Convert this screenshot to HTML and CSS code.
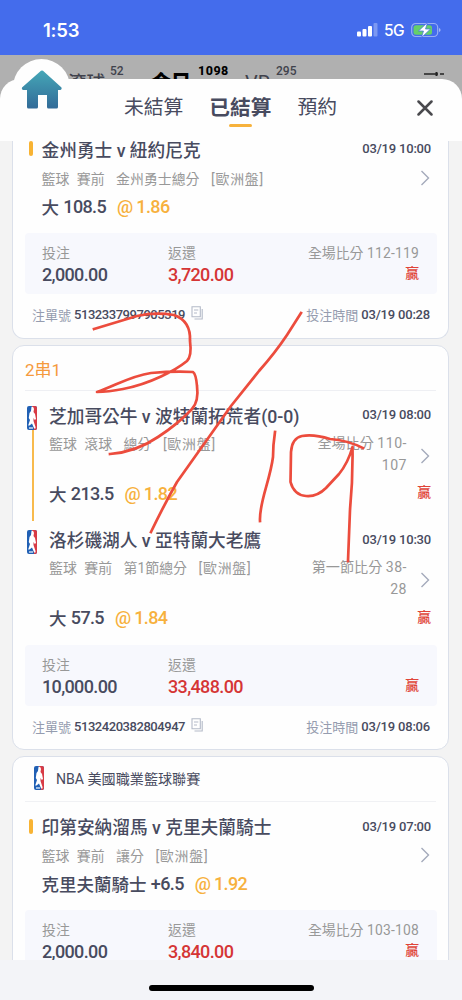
FILE: index.html
```
<!DOCTYPE html>
<html lang="zh-Hant">
<head>
<meta charset="utf-8">
<meta name="viewport" content="width=device-width">
<title>已結算</title>
<link rel="stylesheet" href="styles.css">
</head>
<body>
<svg class="defs" width="0" height="0">
  <defs>
    <symbol id="nba" viewBox="0 0 10 24">
      <rect width="10" height="24" rx="2" fill="#2160b4"/>
      <path d="M5 0h3a2 2 0 0 1 2 2v20a2 2 0 0 1-2 2H7z" fill="#d83b45"/>
      <path d="M4.500.8Q6.500 0 7 3L6.500 6 8 8l1 5-1.200 1L6.500 12v3l2 6v1.500H7.200L5 17.500l-2.500 2H1.200L3 14 1.800 12l.7-5L4 5z" fill="#fff"/>
      <path d="M2 22h4" stroke="#d5e4f7" stroke-width="1.400"/>
    </symbol>
    <symbol id="chev" viewBox="0 0 10 16"><path d="M1.500 1 8.500 8l-7 7" fill="none" stroke="#a4aabb" stroke-width="1.400"/></symbol>
    <symbol id="copy" viewBox="0 0 12 14"><path d="M1 .8h8.300v10H1zM3 4h4.300M3 7h3M11.200 3v10H3.500" fill="none" stroke="#b4bac8" stroke-width="1.100"/></symbol>
  </defs>
</svg>
<div class="screen">
  <header class="status">
    <span class="clock">1:53</span>
    <svg class="signal" width="21" height="14" viewBox="0 0 21 14"><g fill="#fff"><rect y="8.500" width="4" height="5" rx="1"/><rect x="5.500" y="6" width="4" height="7.500" rx="1"/><rect x="11" y="3" width="4" height="10.500" rx="1"/><rect x="16.500" width="4" height="13.500" rx="1" opacity=".3"/></g></svg>
    <span class="net">5G</span>
    <svg class="battery" width="30" height="16" viewBox="0 0 30 16"><rect x=".7" y="1.500" width="26" height="13" rx="4" fill="none" stroke="#fff" stroke-opacity=".45" stroke-width="1.200"/><rect x="2.500" y="3.300" width="18.500" height="9.400" rx="2.500" fill="#65cf69"/><path d="M28 6v4q1.600-.5 1.600-2T28 6z" fill="#fff" opacity=".5"/><path d="M16.500.5 7.500 9h5L10.500 15.500l9-8.500h-5z" fill="#fff" stroke="#446cec" stroke-width=".7"/></svg>
  </header>
  <nav class="sports">
    <span class="sport s-volley">滾球</span><sup class="c-volley">52</sup>
    <span class="sport s-today">今日</span><sup class="c-today">1098</sup>
    <span class="sport s-vr">VR</span><sup class="c-vr">295</sup>
    <svg class="filter" width="20" height="6" viewBox="0 0 20 6"><path d="M0 3h14M16 3h4" stroke="#222" stroke-width="1.700"/><path d="M12.500 1v4" stroke="#222" stroke-width="2"/></svg>
  </nav>
  <section class="sheet">
    <div class="tabs">
      <span class="tab">未結算</span>
      <span class="tab on">已結算</span>
      <span class="tab">預約</span>
      <svg class="close" width="16" height="16" viewBox="0 0 16 16"><path d="m1.500 1.500 13 13m0-13-13 13" stroke="#4a4a4e" stroke-width="2.500" stroke-linecap="round"/></svg>
    </div>
    <main class="list">
      <article class="card first">
        <div class="title"><i class="bar"></i><b>金州勇士 v 紐約尼克</b><time>03/19 10:00</time></div>
        <div class="meta"><span>籃球</span><span>賽前</span><span class="wide">金州勇士總分</span><span class="wide market">[歐洲盤]</span><svg class="chev"><use href="#chev"/></svg></div>
        <div class="pick">大 <span class="n">108.5</span><em>@ 1.86</em></div>
        <div class="box">
          <div><label>投注</label><strong>2,000.00</strong></div>
          <div><label>返還</label><strong class="red">3,720.00</strong></div>
          <div class="res"><label>全場比分 <span class="sc">112-119</span></label><span class="win">贏</span></div>
        </div>
        <div class="foot"><span>注單號</span><b class="id">5132337997905319</b><svg class="copy"><use href="#copy"/></svg><span class="at">投注時間</span><time>03/19 00:28</time></div>
      </article>

      <article class="card second">
        <div class="combo">2串1</div>
        <div class="leg joined">
          <div class="rail"><svg class="nba"><use href="#nba"/></svg></div>
          <div class="body">
            <div class="title"><b>芝加哥公牛 v 波特蘭拓荒者(0-0)</b><time>03/19 08:00</time></div>
            <div class="info">
              <div class="meta"><span>籃球</span><span>滾球</span><span class="wide">總分</span><span class="wide market">[歐洲盤]</span></div>
              <div class="legscore">全場比分 <span class="sc">110-<br>107</span></div>
              <svg class="chev"><use href="#chev"/></svg>
            </div>
            <div class="pick">大 <span class="n">213.5</span><em>@ 1.82</em><span class="win">贏</span></div>
          </div>
        </div>
        <div class="leg">
          <div class="rail"><svg class="nba"><use href="#nba"/></svg></div>
          <div class="body">
            <div class="title"><b>洛杉磯湖人 v 亞特蘭大老鷹</b><time>03/19 10:30</time></div>
            <div class="info">
              <div class="meta"><span>籃球</span><span>賽前</span><span class="wide">第1節總分</span><span class="wide market">[歐洲盤]</span></div>
              <div class="legscore">第一節比分 <span class="sc">38-<br>28</span></div>
              <svg class="chev"><use href="#chev"/></svg>
            </div>
            <div class="pick">大 <span class="n">57.5</span><em>@ 1.84</em><span class="win">贏</span></div>
          </div>
        </div>
        <div class="box">
          <div><label>投注</label><strong>10,000.00</strong></div>
          <div><label>返還</label><strong class="red">33,488.00</strong></div>
          <div class="res"><label>&nbsp;</label><span class="win">贏</span></div>
        </div>
        <div class="foot"><span>注單號</span><b class="id">5132420382804947</b><svg class="copy"><use href="#copy"/></svg><span class="at">投注時間</span><time>03/19 08:06</time></div>
      </article>

      <article class="card third">
        <div class="league"><svg class="nba"><use href="#nba"/></svg><span>NBA 美國職業籃球聯賽</span></div>
        <div class="title"><i class="bar"></i><b>印第安納溜馬 v 克里夫蘭騎士</b><time>03/19 07:00</time></div>
        <div class="meta"><span>籃球</span><span>賽前</span><span class="wide">讓分</span><span class="wide market">[歐洲盤]</span><svg class="chev"><use href="#chev"/></svg></div>
        <div class="pick">克里夫蘭騎士 <span class="n">+6.5</span><em>@ 1.92</em></div>
        <div class="box">
          <div><label>投注</label><strong>2,000.00</strong></div>
          <div><label>返還</label><strong class="red">3,840.00</strong></div>
          <div class="res"><label>全場比分 <span class="sc">103-108</span></label><span class="win">贏</span></div>
        </div>
      </article>
    </main>
  </section>
  <footer class="homebar"><i></i></footer>

  <div class="home"><svg width="42" height="40" viewBox="0 0 42 40"><defs><linearGradient id="hg" x2="0" y2="1"><stop stop-color="#45a7b7"/><stop offset="1" stop-color="#326b98"/></linearGradient></defs><path d="M20 .8q1-.8 2 0L40.500 17.500q.8 1.700-1 2.500H37v17q0 1.500-1.500 1.500H27.500q-1.500 0-1.500-1.500V25H17v12q0 1.500-1.500 1.500H7.500Q6 38.500 6 37V20H2q-1.800-.8-1-2.500z" fill="url(#hg)"/></svg></div>
  <svg class="ink" width="462" height="1000" viewBox="0 0 462 1000">
    <g fill="none" stroke="#ec4c3d" stroke-width="2.700" stroke-linecap="square" stroke-linejoin="round">
      <path d="M94 329 L137 316 Q155 312 174 315 Q191 321 190 341 Q192 356 187 361 C176 370 150 384 123 389 Q108 392 97 392 C115 386 130 376 151 373 Q174 371 193 372 Q196 374 197 386 Q199 401 192 409 Q178 424 158 437 Q136 452 110 454"/>
      <path d="M301 313 L287 335 Q275 353 259 371 L231 406 L199 451 L177 482 Q164 505 151 532"/>
      <path d="M275 432 Q273 445 273 457 C270 481 259 502 260 521"/>
      <path d="M363 448 Q347 440 330 439 Q314 434 302 436 Q292 438 291 452 L290.500 482 Q294 495 306 496 Q317 497 326 488 L339 474 Q348 463 352.500 447 Q353 479 350 510 L348 561"/>
    </g>
  </svg>
</div>
</body>
</html>
```
FILE: styles.css
```
* { box-sizing: border-box; }
body { margin: 0; font-family: Roboto, "Noto Sans CJK TC", sans-serif; color: #484b5f; }
.defs { display: block; }
.screen { position: relative; width: 462px; height: 1000px; overflow: hidden; background: #b0b0b0; display: flex; flex-direction: column; }

.status { height: 55px; flex: none; background: #446cec; color: #fff; display: flex; align-items: center; padding: 5px 21px 0 43px; }
.clock { font: 600 18.500px Inter, sans-serif; letter-spacing: -.2px; flex: 1; }
.net { font: 500 15.500px Inter, sans-serif; margin: 0 7px 0 6px; letter-spacing: -.6px; }

.sports { height: 44px; margin-bottom: -20px; flex: none; padding-left: 68px; display: flex; align-items: flex-start; line-height: 20px; white-space: nowrap; }
.sport { font-size: 18.500px; margin-top: 18px; color: #40424c; }
.s-volley { width: 42px; font-weight: 500; }
.s-today { width: 47px; font-size: 20px; font-weight: 800; color: #000; }
.s-vr { width: 31px; font-size: 20px; }
.sports sup { font-size: 12.500px; line-height: 14px; margin-top: 9px; font-weight: 500; color: #40424c; }
.sports .c-volley { width: 41px; font-size: 12px; }
.sports .c-today { width: 47px; font-weight: 800; color: #000; letter-spacing: .5px; }
.sports .c-vr { font-size: 12px; width: 148px; }
.filter { margin-top: 16px; flex: none; }

.sheet { position: relative; height: 881px; flex: none; background: #fefefe; border-radius: 20px 20px 0 0; display: flex; flex-direction: column; }
.tabs { height: 62px; flex: none; display: flex; align-items: center; padding: 0 29px 4px 124px; font-size: 19.800px; }
.tab { margin-right: 26px; line-height: 28px; position: relative; }
.tab.on { font-size: 20.700px; font-weight: 700; }
.tab.on::after { content: ""; position: absolute; left: 20px; bottom: -5px; width: 23px; height: 3px; border-radius: 2px; background: #f7b23c; }
.close { margin-left: auto; }

.list { height: 819px; padding: 0 13px 0 12px; background: #f3f3f3; overflow: hidden; }
.card { background: #fefefe; border: 1px solid #dbe0ea; border-radius: 12px; padding: 0 12px; margin-bottom: 6px; }
.card.first { height: 198px; border-top: 0; border-radius: 0 0 12px 12px; }
.card.second { height: 405px; }
.card.third { height: 240px; }

.title { display: flex; align-items: center; height: 26px; padding-right: 5px; white-space: nowrap; }
.title b { font-size: 17.700px; font-weight: 500; }
.bar { width: 3.500px; height: 15px; border-radius: 2px; background: #f8b333; margin: 0 9px 0 4px; }
time { margin-left: auto; font-size: 13px; font-weight: 500; letter-spacing: -.2px; }
.meta { display: flex; align-items: center; height: 22px; font-size: 13.900px; color: #989898; white-space: nowrap; gap: 7.500px; }
.meta .wide { margin-left: 4px; }
.meta .market { letter-spacing: .8px; }
.chev { width: 10px; height: 16px; flex: none; }
.meta .chev { margin-left: auto; }
.pick { display: flex; align-items: center; height: 24px; font-size: 17.500px; font-weight: 500; white-space: pre; }
.n, .pick em, strong { font-size: 18px; font-weight: 500; letter-spacing: -.65px; }
.pick em { color: #f7b13d; font-style: normal; margin-left: 11px; }
.win { color: #e04438; font-size: 13.800px; font-weight: 500; }

.card > .meta, .card > .pick { padding: 0 6px 0 16.500px; }
.first > .title { height: 15px; }
.first > .meta { margin-top: 11px; }
.first > .pick { margin-top: 5px; }
.box { height: 61px; background: #f7f8fd; border-radius: 4px; display: grid; grid-template-columns: 126px 1fr auto; padding: 10px 18px 0 17px; margin-right: -1px; }
.box > div { display: flex; flex-direction: column; }
.box label { font-size: 13.900px; line-height: 20px; color: #989898; }
.box strong { line-height: 24px; }
.box .red { color: #d53535; }
.res { align-items: flex-end; }
.res .win { line-height: 21px; }
.sc { letter-spacing: .2px; }
.first .box { margin-top: 15px; }
.foot { display: flex; align-items: center; height: 41px; padding: 0 6px 0 7px; font-size: 13px; color: #959caf; white-space: nowrap; }
.foot .id { font-size: 13px; font-weight: 500; color: #484b5f; letter-spacing: -.45px; margin-left: 3px; }
.copy { width: 12px; height: 14px; margin: -4px 0 0 6px; }
.foot .at { margin-left: auto; }
.foot time { margin-left: 3px; color: #484b5f; }

.combo { height: 45px; line-height: 49px; border-bottom: 1px solid #eeeff3; font-size: 17px; color: #f59a3d; }
.leg { display: flex; height: 124.500px; padding-top: 10.500px; }
.rail { width: 24px; flex: none; position: relative; padding: 4px 0 0 2px; }
.nba { display: block; width: 10px; height: 24px; }
.joined .rail::after { content: ""; position: absolute; left: 7px; top: 28px; width: 1.500px; height: 91px; background: #f8ba4c; }
.body { flex: 1; }
.info { display: flex; height: 53.500px; padding: 4px 6px 0 0; }
.info .meta { height: 22px; }
.legscore { margin-left: auto; margin-right: 13px; text-align: right; font-size: 14.100px; line-height: 22px; color: #989898; white-space: nowrap; }
.legscore .sc { letter-spacing: .5px; }
.info .chev { margin-top: 16px; }
.leg .pick .win { margin: -4px 5px 0 auto; }
.second .box { margin-top: 5px; }

.league { height: 45px; border-bottom: 1px solid #f0f1f4; display: flex; align-items: center; gap: 12px; padding: 0 0 2px 9px; font-size: 14.100px; }
.third > .title { margin-top: 11px; }
.third > .meta { margin-top: 5px; }
.third > .pick { margin-top: 5px; }
.third .box { margin-top: 15px; }

.homebar { height: 40px; flex: none; background: #f3f4f8; display: flex; justify-content: center; padding-top: 25px; }
.homebar i { width: 165px; height: 5.500px; border-radius: 3px; background: #000; }
.home { position: absolute; left: 13px; top: 59px; width: 57px; height: 57px; border-radius: 50%; background: #fefefe; padding: 11px 0 0 8px; }
.ink { position: absolute; left: 0; top: 0; pointer-events: none; }
```
